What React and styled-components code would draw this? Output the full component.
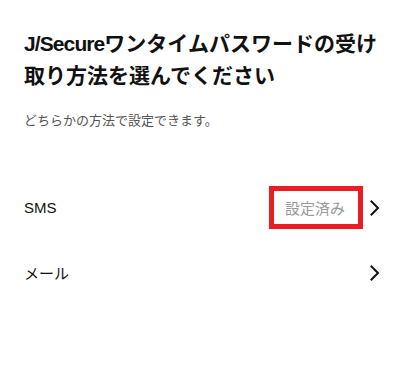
import styled, { createGlobalStyle } from 'styled-components'

const GlobalStyle = createGlobalStyle`
  html, body {
    margin: 0;
    padding: 0;
    background: #ffffff;
  }
  body {
    font-family: "Liberation Sans", "Noto Sans CJK JP", sans-serif;
    color: #111111;
  }
`

const Page = styled.div`
  width: 412px;
  height: 368px;
  box-sizing: border-box;
  padding: 28px 0 0 24px;
`

const Title = styled.h1`
  margin: 0;
  font-size: 21px;
  line-height: 32px;
  font-weight: bold;
  color: #111111;
`

const Brand = styled.span`
  letter-spacing: -0.9px;
`

const Lead = styled.p`
  margin: 19px 0 0;
  font-size: 13px;
  line-height: 20px;
  color: #555555;
`

const List = styled.div`
  margin-top: 44px;
  display: flex;
  flex-direction: column;
`

const Row = styled.div`
  height: 65px;
  display: flex;
  align-items: center;
  padding-right: 25px;
`

const Label = styled.span`
  flex: 1;
  font-size: 15px;
  color: #111111;
`

const Status = styled.span`
  box-sizing: border-box;
  height: 43px;
  display: flex;
  align-items: center;
  padding: 0 13px 0 11px;
  border: 5px solid ${(p) => (p.$marked ? '#ec1c24' : 'transparent')};
  font-size: 15px;
  color: #999999;
`

const Chevron = () => (
  <svg width="24" height="24" viewBox="0 0 24 24" fill="none">
    <path d="M8.5 5.5L15 12L8.5 18.5" stroke="#111" strokeWidth="2" strokeLinecap="square" />
  </svg>
)

const methods = [
  { name: 'SMS', status: '設定済み' },
  { name: 'メール' },
]

export default function App() {
  return (
    <>
      <GlobalStyle />
      <Page>
        <Title>
          <Brand>J/Secure</Brand>ワンタイムパスワードの受け
          <br />
          取り方法を選んでください
        </Title>
        <Lead>どちらかの方法で設定できます。</Lead>
        <List>
          {methods.map((m) => (
            <Row key={m.name}>
              <Label>{m.name}</Label>
              {m.status && <Status $marked>{m.status}</Status>}
              <Chevron />
            </Row>
          ))}
        </List>
      </Page>
    </>
  )
}
